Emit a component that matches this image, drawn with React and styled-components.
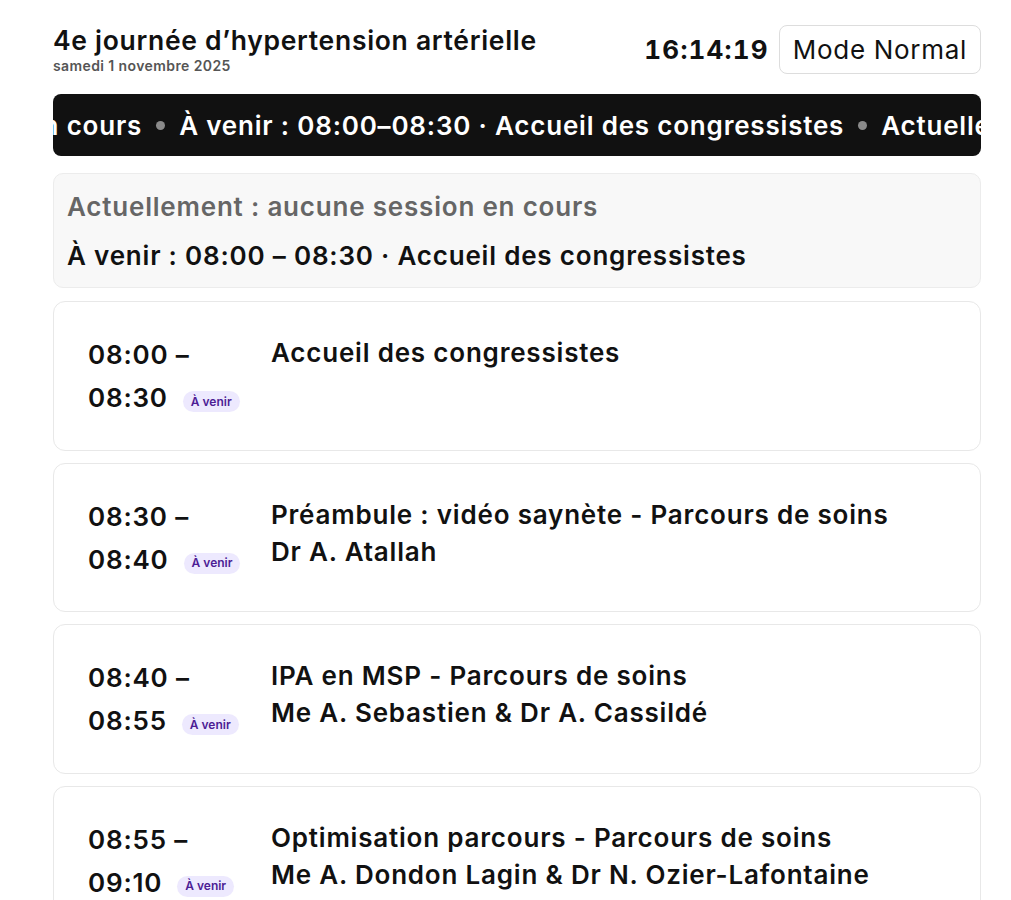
import React from "react";
import styled, { createGlobalStyle } from "styled-components";

const GlobalStyle = createGlobalStyle`
  body {
    margin: 0;
    background: #ffffff;
    font-family: Inter, "Noto Sans", sans-serif;
    color: #111111;
  }
`;

const Page = styled.main`
  padding: 24px 30px 24px 53px;
  display: flex;
  flex-direction: column;
`;

const Header = styled.header`
  display: flex;
  justify-content: space-between;
  align-items: center;
  height: 50px;
`;

const TitleBlock = styled.div`
  display: flex;
  flex-direction: column;
`;

const Title = styled.h1`
  margin: 0;
  font-size: 26.5px;
  font-weight: 600;
  letter-spacing: 0.7px;
  line-height: 34px;
`;

const Subtitle = styled.div`
  font-size: 14px;
  font-weight: 600;
  letter-spacing: 0.4px;
  color: #555555;
  line-height: 18px;
`;

const Controls = styled.div`
  display: flex;
  align-items: center;
  gap: 10px;
`;

const Clock = styled.span`
  font-size: 26px;
  font-weight: 700;
  font-variant-numeric: tabular-nums;
  letter-spacing: 1.2px;
`;

const ModeButton = styled.button`
  font-family: Inter, "Noto Sans", sans-serif;
  font-size: 26px;
  font-weight: 400;
  letter-spacing: 0.7px;
  color: #111111;
  background: #ffffff;
  border: 1px solid #dddddd;
  border-radius: 8px;
  height: 49px;
  padding: 0 13px;
`;

const Ticker = styled.div`
  margin-top: 20px;
  height: 62px;
  background: #111111;
  border-radius: 8px;
  overflow: hidden;
  display: flex;
  align-items: center;
`;

const TickerTrack = styled.div`
  display: flex;
  align-items: center;
  gap: 14px;
  white-space: nowrap;
  color: #ffffff;
  font-size: 26px;
  font-weight: 600;
  letter-spacing: 0.8px;
  flex-shrink: 0;
`;

const Dot = styled.span`
  width: 9px;
  height: 9px;
  border-radius: 50%;
  background: #8a8a8a;
  flex-shrink: 0;
`;

const NowBox = styled.section`
  margin-top: 17px;
  background: #f8f8f8;
  border: 1px solid #ececec;
  border-radius: 10px;
  padding: 15px 14px 13px 13px;
  display: flex;
  flex-direction: column;
  gap: 13px;
`;

const NowLine = styled.div`
  font-size: 26px;
  font-weight: 600;
  letter-spacing: 0.8px;
  line-height: 36px;
  color: ${({ $muted }) => ($muted ? "#666666" : "#111111")};
`;

const List = styled.div`
  margin-top: 13px;
  display: flex;
  flex-direction: column;
  gap: 12px;
`;

const Card = styled.article`
  border: 1px solid #e8e8e8;
  border-radius: 12px;
  padding: 31px 34px 30.5px;
  display: grid;
  grid-template-columns: 183px 1fr;
`;

const TimeCol = styled.div`
  display: flex;
  flex-direction: column;
`;

const TimeLine = styled.div`
  font-size: 26px;
  font-weight: 600;
  letter-spacing: 0.8px;
  line-height: 43px;
  display: flex;
  align-items: center;
  gap: 15px;
`;

const Badge = styled.span`
  display: inline-flex;
  align-items: center;
  height: 21px;
  padding: 0 8px;
  border-radius: 11px;
  background: #ede9fe;
  color: #4c1d95;
  font-size: 12px;
  font-weight: 600;
  letter-spacing: 0;
  line-height: 1;
  margin-top: 8px;
`;

const InfoCol = styled.div`
  display: flex;
  flex-direction: column;
  padding-top: 1px;
`;

const SessionTitle = styled.div`
  font-size: 26px;
  font-weight: 600;
  letter-spacing: 0.8px;
  line-height: 37px;
`;

const sessions = [
  { start: "08:00", end: "08:30", title: "Accueil des congressistes" },
  {
    start: "08:30",
    end: "08:40",
    title: "Préambule : vidéo saynète - Parcours de soins",
    speaker: "Dr A. Atallah",
  },
  {
    start: "08:40",
    end: "08:55",
    title: "IPA en MSP - Parcours de soins",
    speaker: "Me A. Sebastien & Dr A. Cassildé",
  },
  {
    start: "08:55",
    end: "09:10",
    title: "Optimisation parcours - Parcours de soins",
    speaker: "Me A. Dondon Lagin & Dr N. Ozier-Lafontaine",
  },
];

const tickerItems = [
  "Actuellement : aucune session en cours",
  "À venir : 08:00–08:30 · Accueil des congressistes",
  "Actuellement : aucune session en cours",
  "À venir : 08:00–08:30 · Accueil des congressistes",
];

export default function App() {
  return (
    <>
      <GlobalStyle />
      <Page>
        <Header>
          <TitleBlock>
            <Title>4e journée d’hypertension artérielle</Title>
            <Subtitle>samedi 1 novembre 2025</Subtitle>
          </TitleBlock>
          <Controls>
            <Clock>16:14:19</Clock>
            <ModeButton>Mode Normal</ModeButton>
          </Controls>
        </Header>

        <Ticker>
          <TickerTrack style={{ transform: "translateX(-442px)" }}>
            {tickerItems.map((t, i) => (
              <React.Fragment key={i}>
                {i > 0 && <Dot />}
                <span>{t}</span>
              </React.Fragment>
            ))}
          </TickerTrack>
        </Ticker>

        <NowBox>
          <NowLine $muted>Actuellement : aucune session en cours</NowLine>
          <NowLine>À venir : 08:00 – 08:30 · Accueil des congressistes</NowLine>
        </NowBox>

        <List>
          {sessions.map((s) => (
            <Card key={s.start}>
              <TimeCol>
                <TimeLine>{s.start} –</TimeLine>
                <TimeLine>
                  {s.end}
                  <Badge>À venir</Badge>
                </TimeLine>
              </TimeCol>
              <InfoCol>
                <SessionTitle>{s.title}</SessionTitle>
                {s.speaker && <SessionTitle>{s.speaker}</SessionTitle>}
              </InfoCol>
            </Card>
          ))}
        </List>
      </Page>
    </>
  );
}
